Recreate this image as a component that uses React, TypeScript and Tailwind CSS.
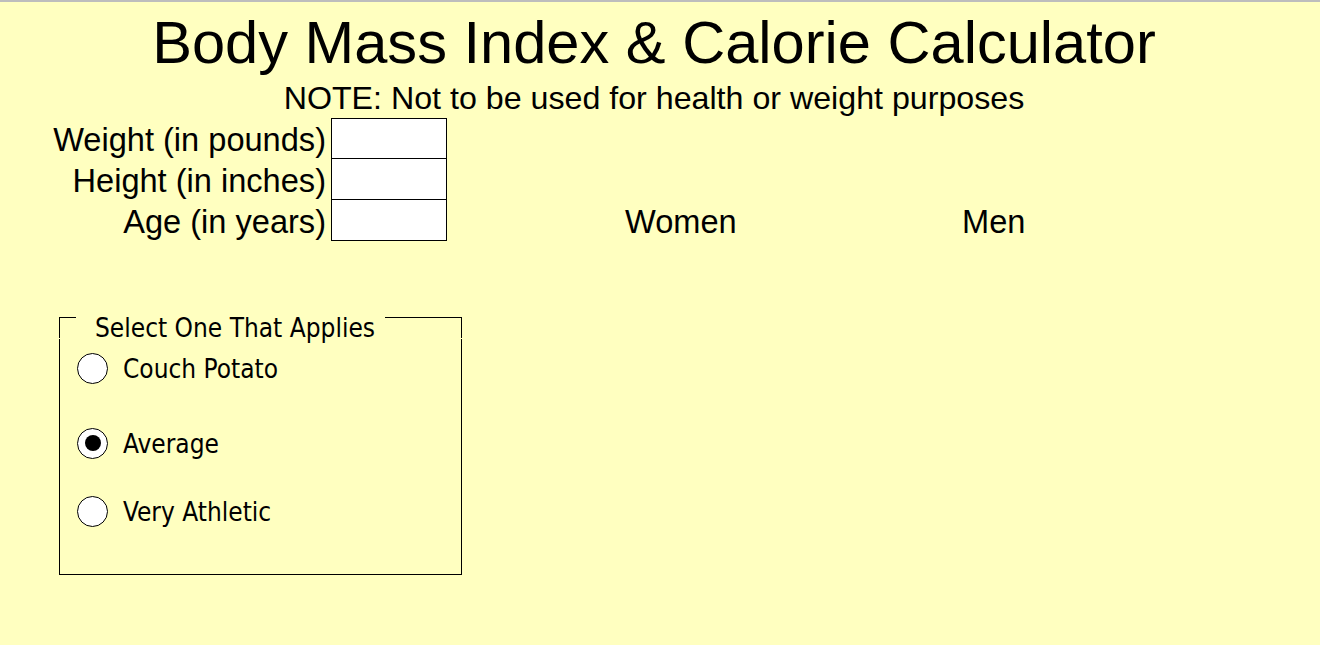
const arial = { fontFamily: '"Liberation Sans", Arial, sans-serif' };
const tahoma = { fontFamily: '"DejaVu Sans Condensed", "DejaVu Sans", Tahoma, sans-serif' };

function Radio({ checked }: { checked?: boolean }) {
  return (
    <span className="flex h-[31px] w-[31px] shrink-0 items-center justify-center rounded-full border-[1.5px] border-black bg-white">
      {checked && <span className="h-[16px] w-[16px] rounded-full bg-black" />}
    </span>
  );
}

export default function App() {
  const fields = [
    { label: "Weight (in pounds)", h: "h-[41px]" },
    { label: "Height (in inches)", h: "h-[42px] -mt-px" },
    { label: "Age (in years)", h: "h-[42px] -mt-px" },
  ];

  return (
    <div className="h-[645px] w-full overflow-hidden border-t-2 border-[#bdbdbd] bg-[#ffffc0] text-black">
      <div className="w-[1308px]" style={arial}>
        {/* header */}
        <h1 className="pt-[6px] text-center text-[59.6px] leading-[69px] font-normal">
          Body Mass Index &amp; Calorie Calculator
        </h1>
        <p className="mt-[3px] text-center text-[32.2px] leading-[37px]">
          NOTE: Not to be used for health or weight purposes
        </p>

        {/* inputs */}
        <div className="mt-px flex flex-col">
          {fields.map((f, i) => (
            <div key={f.label} className={`flex items-center ${f.h}`}>
              <div className="w-[326px] pt-[2px] text-right text-[32.6px] leading-[41px]">{f.label}</div>
              <div className="ml-[5px] h-full w-[116px] border border-black bg-white" />
              {i === 2 && (
                <>
                  <div className="ml-[178px] w-[337px] pt-[2px] text-[32.6px] leading-[41px]">Women</div>
                  <div className="pt-[2px] text-[32.6px] leading-[41px]">Men</div>
                </>
              )}
            </div>
          ))}
        </div>
      </div>

      {/* activity frame */}
      <div className="ml-[59px] mt-[76px] w-[403px]" style={tahoma}>
        <div className="flex">
          <div className="h-[21px] w-[17px] border-l border-t border-black" />
          <div className="pl-[19px] pr-[10px] pt-px text-[26px] leading-[21px]">Select One That Applies</div>
          <div className="h-[21px] flex-1 border-r border-t border-black" />
        </div>
        <div className="h-[236px] border-b border-l border-r border-black pl-[17px] pt-[9px] text-[26px]">
          <label className="flex h-[40px] items-center gap-[15px]">
            <Radio />
            <span className="pt-[3px]">Couch Potato</span>
          </label>
          <label className="mt-[35px] flex h-[40px] items-center gap-[15px]">
            <Radio checked />
            <span className="pt-[3px]">Average</span>
          </label>
          <label className="mt-[28px] flex h-[40px] items-center gap-[15px]">
            <Radio />
            <span className="pt-[3px]">Very Athletic</span>
          </label>
        </div>
      </div>
    </div>
  );
}
